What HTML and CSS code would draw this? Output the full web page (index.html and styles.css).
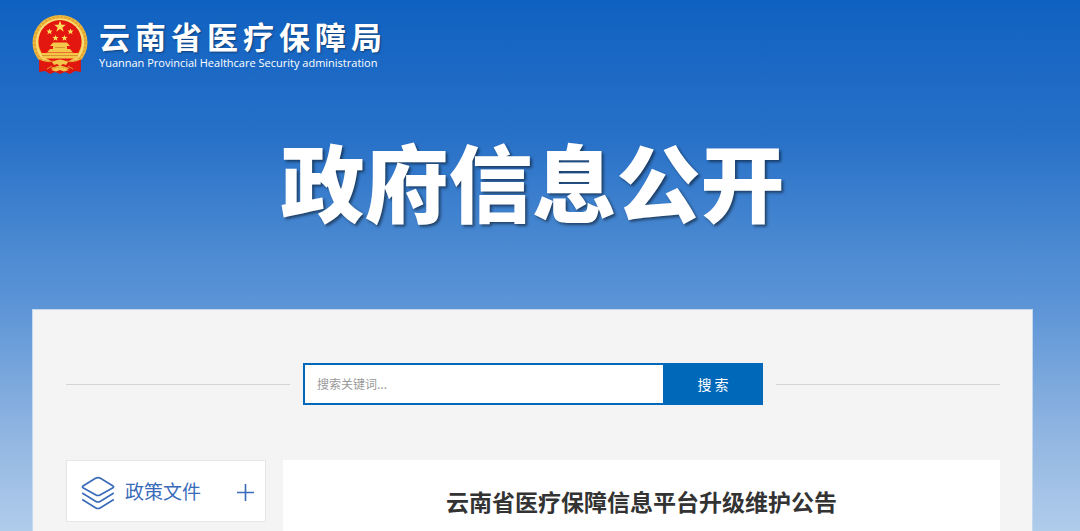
FILE: index.html
```html
<!DOCTYPE html>
<html lang="zh-CN">
<head>
<meta charset="utf-8">
<title>云南省医疗保障局</title>
<link rel="stylesheet" href="styles.css">
</head>
<body class="page">
<header class="header">
  <a class="brand" href="#">
    <svg class="emblem" viewBox="0 0 56 60" aria-hidden="true">
      <path d="M8 43 L7 57 L13 56 L18 59 L23 57 L28 59 L33 57 L38 59 L43 56 L49 57 L48 43Z" fill="#d9150f"/>
      <circle cx="28" cy="27.500" r="27.500" fill="#eeb83c"/>
      <circle cx="28" cy="27.500" r="25.500" fill="none" stroke="#dea133" stroke-width="2" stroke-dasharray="2 2"/>
      <circle cx="28" cy="27.500" r="23" fill="none" stroke="#f9dc78" stroke-width="2"/>
      <circle cx="28" cy="26.500" r="21.500" fill="#e3170f"/>
      <path d="M28 5.500l1.500 4.200h4.400l-3.500 2.700 1.300 4.300-3.700-2.600-3.700 2.600 1.300-4.300-3.500-2.700h4.400z" fill="#fbdc5c"/>
      <path id="star" d="M17.500 13.500l.9 2.100h2.200l-1.700 1.500.6 2.200-2-1.200-2 1.200.6-2.200-1.700-1.500h2.200z" fill="#fbdc5c"/>
      <use href="#star" x="21"/>
      <use href="#star" x="6" y="6.500"/>
      <use href="#star" x="15" y="6.500"/>
      <path d="M21 27.500h14l3 3.500H18zM21 31h14v3H21zM18 34h20l3 3.500H15zM10 38h36v5.500H10z" fill="#f4c64a"/>
      <path d="M10 40.500h36M23 32.500h10" stroke="#d9942a" stroke-width="1"/>
      <path d="M7 44.500q8 4 15 1l6-1 6 1q7 3 15-1l-.5 11q-7 1-12.500-3l-8-2-8 2q-5 4-12.500 3z" fill="#df170f"/>
      <path d="M12 45q5 3 10 1M44 45q-5 3-10 1M15 54l5-3M41 54l-5-3" stroke="#e99b2f" stroke-width="1" fill="none"/>
      <path d="M20 47q8-5 16 0l-2 3-3-1-3 2-3-2-3 1zM19 55q9-5 18 0l-5 1.500-4-1.500-4 1.500z" fill="#f3c64b"/>
    </svg>
    <span class="brand-text">
      <span class="brand-name">云南省医疗保障局</span>
      <span class="brand-sub" lang="en">Yuannan Provincial Healthcare Security administration</span>
    </span>
  </a>
  <h1 class="banner">政府信息公开</h1>
</header>
<main class="panel">
  <form class="search-row">
    <div class="search">
      <input class="search-input" type="text" placeholder="搜索关键词..." aria-label="搜索关键词">
      <button class="search-button" type="button">搜 索</button>
    </div>
  </form>
  <div class="columns">
    <nav class="sidebar">
      <button class="menu-item" type="button">
        <svg class="layers" viewBox="0 0 34 34" aria-hidden="true">
          <path d="M14.500 2.300q2.500-1.300 5 0l12.500 7.700q1.200.9 0 1.800L19.500 18.700q-2.500 1.500-5 0L2 11.800q-1.200-.9 0-1.800zM1.200 17L14.500 25.200q2.500 1.500 5 0L32.800 17M1.200 23.500L14.500 31.700q2.500 1.500 5 0L32.800 23.500"/>
        </svg>
        <span class="menu-label">政策文件</span>
        <svg class="plus" viewBox="0 0 17 17" aria-hidden="true"><path d="M8.500 0v17M0 8.500h17"/></svg>
      </button>
    </nav>
    <article class="article">
      <h2 class="article-title">云南省医疗保障信息平台升级维护公告</h2>
    </article>
  </div>
</main>
</body>
</html>
```
FILE: styles.css
```css
* {
  box-sizing: border-box;
}

html {
  height: 100%;
}

.page {
  display: flex;
  flex-direction: column;
  min-height: 100%;
  margin: 0;
  padding: 0 47px 0 32px;
  background: linear-gradient(#0f61c1, #2871c8 26%, #4a89d1 46%, #5d95d7 58%, #8db3e0 80%, #b0cceb);
  font-family: "Noto Sans CJK SC", sans-serif;
}

.header {
  padding-top: 15px;
}

.brand {
  display: inline-flex;
  gap: 11px;
  color: #fff;
  text-decoration: none;
}

.emblem {
  width: 56px;
  height: 60px;
}

.brand-text {
  display: flex;
  flex-direction: column;
  gap: 2px;
  padding-top: 4px;
}

.brand-name {
  font-size: 31px;
  font-weight: 700;
  line-height: 34px;
  letter-spacing: 5px;
  text-shadow: 1px 1px 2px rgba(0, 0, 0, 0.4);
}

.brand-sub {
  font-family: "Open Sans", "Noto Sans", sans-serif;
  font-size: 11px;
  font-weight: 500;
  line-height: 15px;
}

.banner {
  margin: 41px 0 70px;
  color: #fff;
  font-size: 84px;
  font-weight: 900;
  line-height: 118px;
  text-align: center;
  text-shadow: 2px 2px 3px rgba(0, 0, 0, 0.5);
}

.panel {
  flex: 1;
  padding: 53px 32px 0 33px;
  border: 1px solid #c3d7ef;
  border-bottom: 0;
  background: #f4f4f4;
}

.search-row {
  display: flex;
  align-items: center;
  gap: 13px;
}

.search-row::before,
.search-row::after {
  flex: 1;
  height: 1px;
  background: #d5d5d5;
  content: "";
}

.search {
  display: flex;
  width: 460px;
  height: 42px;
}

.search-input {
  flex: 1;
  min-width: 0;
  padding: 0 12px 2px;
  border: 2px solid #0068b9;
  border-right: 0;
  background: #fff;
  font: 12px "Noto Sans CJK SC", sans-serif;
}

.search-input::placeholder {
  color: #999;
}

.search-button {
  width: 100px;
  padding: 0;
  border: 0;
  background: #0068b9;
  color: #fff;
  font: 14px "Noto Sans CJK SC", sans-serif;
}

.columns {
  display: flex;
  gap: 17px;
  margin-top: 55px;
}

.sidebar {
  width: 200px;
}

.menu-item {
  display: flex;
  align-items: center;
  width: 100%;
  height: 62px;
  padding: 3px 11px 0 14px;
  border: 1px solid #e6e6e6;
  background: #fff;
  color: #396bb8;
}

.layers,
.plus {
  fill: none;
  stroke: currentColor;
  stroke-width: 1.6;
}

.layers {
  width: 34px;
  height: 34px;
}

.plus {
  width: 17px;
  height: 17px;
}

.menu-label {
  flex: 1;
  padding: 0 0 4px 10px;
  font: 19px/28px "Noto Sans CJK SC", sans-serif;
  text-align: left;
}

.article {
  flex: 1;
  padding: 25px 0 14px;
  background: #fff;
}

.article-title {
  margin: 0;
  color: #333;
  font-size: 23px;
  font-weight: 700;
  line-height: 32px;
  text-align: center;
}
```
